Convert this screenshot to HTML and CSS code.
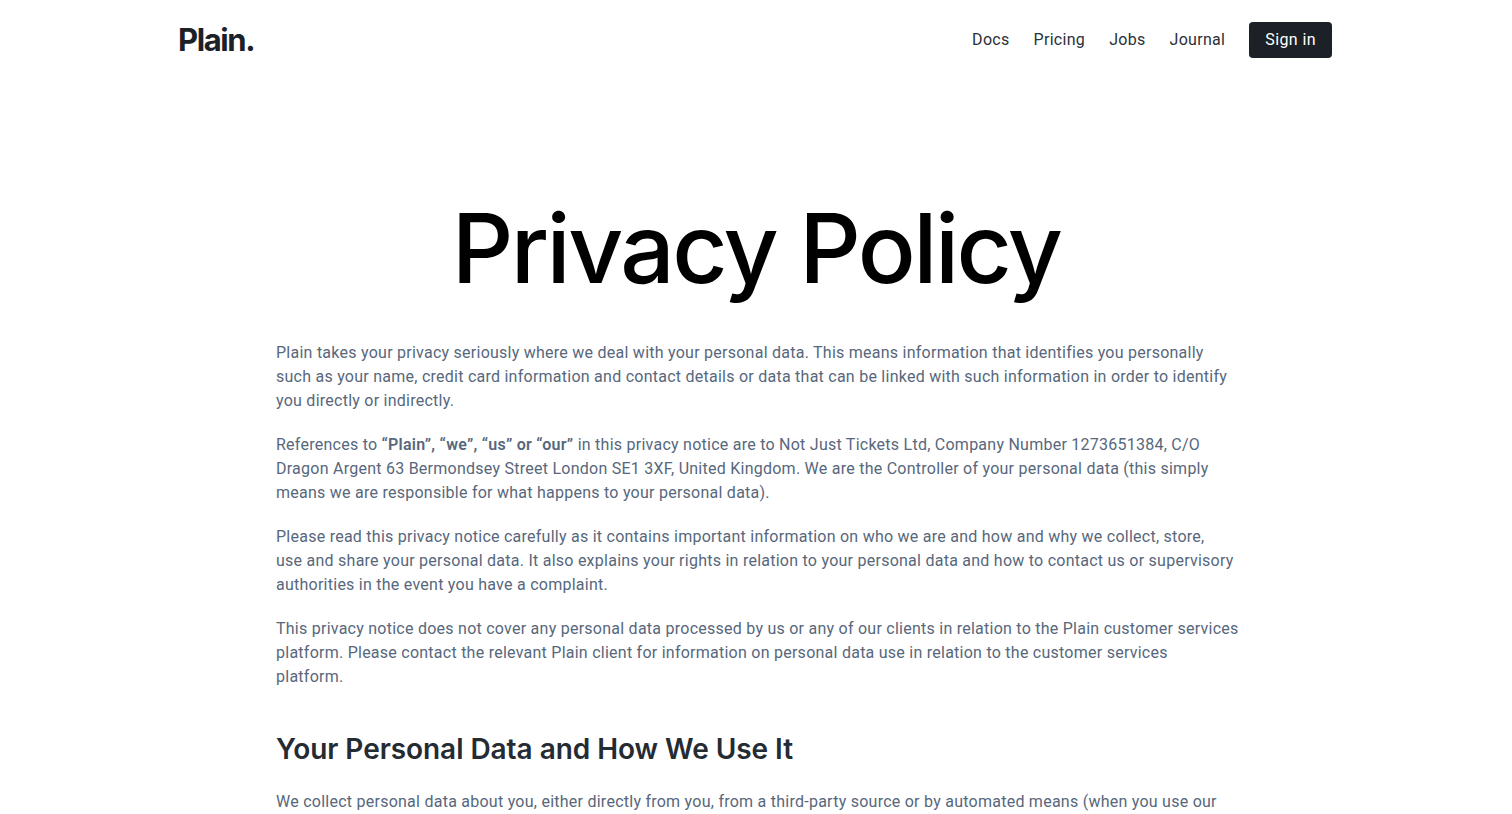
FILE: index.html
```html
<!DOCTYPE html>
<html lang="en">

<head>
    <meta charset="UTF-8">
    <meta name="viewport" content="width=device-width, initial-scale=1.0">
    <title>Privacy Policy</title>
    <link rel="stylesheet" href="styles.css">
</head>

<body>
    <header class="header">
        <a class="logo" href="#">Plain.</a>
        <nav class="nav">
            <a class="nav-link" href="#">Docs</a>
            <a class="nav-link" href="#">Pricing</a>
            <a class="nav-link" href="#">Jobs</a>
            <a class="nav-link" href="#">Journal</a>
            <a class="sign-in" href="#">Sign in</a>
        </nav>
    </header>

    <main class="content">
        <h1 class="title">Privacy Policy</h1>
        <p>Plain takes your privacy seriously where we deal with your personal data. This means information that identifies you personally such as your name, credit card information and contact details or data that can be linked with such information in order to identify you directly or indirectly.</p>
        <p>References to <strong>“Plain”, “we”, “us” or “our”</strong> in this privacy notice are to Not Just Tickets Ltd, Company Number 1273651384, C/O Dragon Argent 63 Bermondsey Street London SE1 3XF, United Kingdom. We are the Controller of your personal data (this simply means we are responsible for what happens to your personal data).</p>
        <p>Please read this privacy notice carefully as it contains important information on who we are and how and why we collect, store,<br>use and share your personal data. It also explains your rights in relation to your personal data and how to contact us or supervisory authorities in the event you have a complaint.</p>
        <p>This privacy notice does not cover any personal data processed by us or any of our clients in relation to the Plain customer services platform. Please contact the relevant Plain client for information on personal data use in relation to the customer services<br>platform.</p>
        <h2 class="section-title">Your Personal Data and How We Use It</h2>
        <p>We collect personal data about you, either directly from you, from a third-party source or by automated means (when you use our</p>
    </main>
</body>

</html>
```

FILE: styles.css
```css
* {
    margin: 0;
    padding: 0;
    box-sizing: border-box;
}

html,
body {
    height: 814px;
    overflow: hidden;
}

body {
    background-color: #fff;
    font-family: "Roboto", "Liberation Sans", sans-serif;
}

a {
    text-decoration: none;
}

.header {
    width: 1154px;
    margin-left: 178px;
    padding-top: 21px;
    display: flex;
    justify-content: space-between;
    align-items: center;
}

.logo {
    font-family: "Inter", sans-serif;
    font-size: 31px;
    font-weight: 700;
    letter-spacing: -1.4px;
    color: #1c2127;
}

.nav {
    display: flex;
    align-items: center;
    gap: 24px;
}

.nav-link {
    font-size: 16px;
    letter-spacing: 0.3px;
    color: #2b3138;
}

.sign-in {
    height: 36px;
    padding: 0 16px;
    display: flex;
    align-items: center;
    background-color: #1c2127;
    border-radius: 4px;
    font-size: 16px;
    letter-spacing: 0.4px;
    color: #fff;
}

.content {
    width: 960px;
    margin: 0 auto;
    padding-top: 132px;
}

.title {
    font-family: "Inter", sans-serif;
    font-size: 96px;
    font-weight: 500;
    line-height: 116px;
    letter-spacing: -2.5px;
    text-align: center;
    color: #000;
    margin-bottom: 35px;
}

.content p {
    font-size: 16px;
    line-height: 24px;
    letter-spacing: 0.25px;
    color: #57677c;
    margin-right: -3px;
    margin-bottom: 20px;
}

.content strong {
    font-weight: 600;
}

.section-title {
    font-family: "Inter", sans-serif;
    font-size: 28px;
    font-weight: 600;
    line-height: 36px;
    letter-spacing: -0.05px;
    color: #252b33;
    margin-top: 42px;
    margin-bottom: 23px;
}
```
